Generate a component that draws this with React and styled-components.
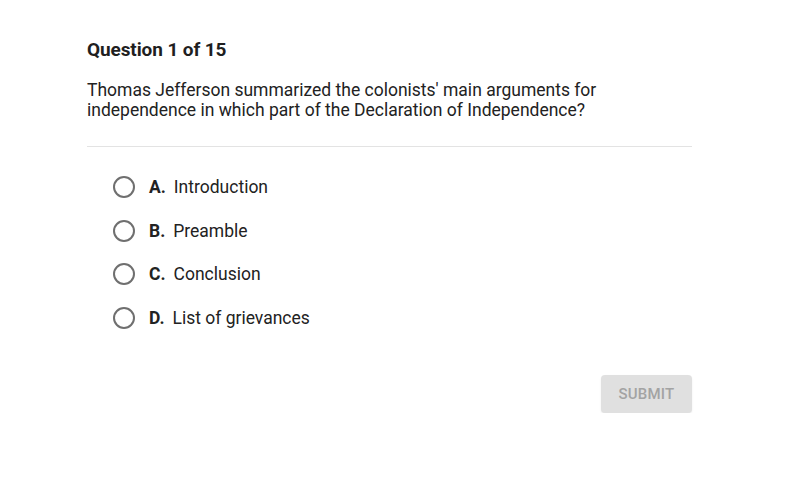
import React from "react";
import styled, { createGlobalStyle } from "styled-components";

const Global = createGlobalStyle`
  html, body { margin: 0; padding: 0; background: #fff; }
  body { font-family: Roboto, "Liberation Sans", Arial, sans-serif; color: #212121; }
`;

const Page = styled.div`
  width: 605px;
  padding: 38px 0 0 87px;
`;

const Title = styled.h1`
  margin: 0;
  font-size: 19px;
  line-height: 24px;
  font-weight: 700;
  color: #1f1f1f;
  letter-spacing: -0.1px;
`;

const Prompt = styled.p`
  margin: 18px 0 0;
  font-size: 17.5px;
  line-height: 20px;
  color: #222;
`;

const Divider = styled.hr`
  margin: 26px 0 0;
  border: 0;
  border-top: 1px solid #e3e3e3;
`;

const Options = styled.div`
  display: flex;
  flex-direction: column;
  padding: 18px 0 0 26px;
`;

const Option = styled.label`
  display: flex;
  align-items: center;
  height: 43.7px;
  cursor: pointer;
`;

const Radio = styled.span`
  box-sizing: border-box;
  width: 22px;
  height: 22px;
  border-radius: 50%;
  border: 2px solid #6f6f6f;
  flex: none;
`;

const Letter = styled.span`
  margin-left: 14px;
  font-size: 17.5px;
  font-weight: 700;
  color: #222;
`;

const Text = styled.span`
  margin-left: 8px;
  font-size: 17.5px;
  color: #222;
`;

const Footer = styled.div`
  display: flex;
  justify-content: flex-end;
  margin-top: 35px;
`;

const Submit = styled.button`
  width: 91px;
  height: 38px;
  border: 0;
  border-radius: 4px;
  background: #e0e0e0;
  color: #a3a3a3;
  font-family: inherit;
  font-size: 15px;
  font-weight: 500;
  letter-spacing: 0.2px;
  box-shadow: 0 1px 2px rgba(0,0,0,0.08);
`;

const options = [
  ["A.", "Introduction"],
  ["B.", "Preamble"],
  ["C.", "Conclusion"],
  ["D.", "List of grievances"],
];

export default function App() {
  return (
    <>
      <Global />
      <Page>
        <Title>Question 1 of 15</Title>
        <Prompt>
          Thomas Jefferson summarized the colonists' main arguments for
          <br />
          independence in which part of the Declaration of Independence?
        </Prompt>
        <Divider />
        <Options>
          {options.map(([l, t]) => (
            <Option key={l}>
              <Radio />
              <Letter>{l}</Letter>
              <Text>{t}</Text>
            </Option>
          ))}
        </Options>
        <Footer>
          <Submit disabled>SUBMIT</Submit>
        </Footer>
      </Page>
    </>
  );
}
